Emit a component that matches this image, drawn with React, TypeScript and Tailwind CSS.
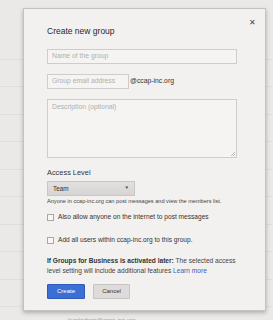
import React from 'react';

const ROWS = [0, 1, 2, 3, 4, 5, 6, 7, 8, 9];

function Checkbox({ label, className }: { label: string; className?: string }) {
  return (
    <label className={`flex items-center gap-[4px] ${className ?? ''}`}>
      <span className="w-[7px] h-[7px] border border-[#a9a7a5] bg-[#f7f6f4] shrink-0" />
      <span className="text-[6.6px] text-[#333] leading-none">{label}</span>
    </label>
  );
}

export default function App() {
  return (
    <div className="relative w-[273px] h-[320px] overflow-hidden bg-[#ebe9e7] font-['Liberation_Sans',Arial,sans-serif]">
      {/* page behind the dialog */}
      <div className="pt-[32px]">
        {ROWS.map((r) => (
          <div key={r} className="h-[27.5px] border-b border-[#e0dedc]" />
        ))}
      </div>
      <div className="absolute left-[68px] top-[316px] text-[6px] text-[#9a9896]">localadmin@ccap-inc.org</div>

      {/* dialog */}
      <div className="absolute left-[23px] top-[8px] w-[243px] h-[303px] bg-[#f2f1ef] border border-[#c4c2c0] shadow-[0_2px_4px_rgba(0,0,0,0.25)] px-[23px] pt-[18px]">
        <span className="absolute right-[9px] top-[10px] text-[7.5px] leading-none text-[#444]">✕</span>

        <h1 className="text-[8.5px] text-[#2a2a2a] leading-none">Create new group</h1>

        <div className="mt-[13px] w-[190px] h-[15px] border border-[#cfcdcb] bg-[#f5f4f2] flex items-center px-[4px] text-[6.8px] text-[#b1afad]">
          Name of the group
        </div>

        <div className="mt-[10px] flex items-center">
          <div className="w-[82px] h-[15px] border border-[#cfcdcb] bg-[#f5f4f2] flex items-center px-[4px] text-[6.8px] text-[#b1afad]">
            Group email address
          </div>
          <span className="ml-[1px] text-[6.8px] text-[#333]">@ccap-inc.org</span>
        </div>

        <div className="relative mt-[10px] w-[190px] h-[59px] border border-[#cfcdcb] bg-[#f5f4f2] px-[4px] pt-[2px] text-[6.8px] text-[#b1afad]">
          Description (optional)
          <svg className="absolute right-[1px] bottom-[1px]" width="5" height="5" viewBox="0 0 5 5">
            <path d="M1 5 L5 1 M3 5 L5 3" stroke="#a8a6a4" strokeWidth="0.7" />
          </svg>
        </div>

        <div className="mt-[11px] text-[7.4px] text-[#333] leading-none">Access Level</div>

        <div className="mt-[5px] w-[88px] h-[15px] border border-[#c9c7c5] bg-gradient-to-b from-[#e2e0de] to-[#d7d5d3] flex items-center justify-between px-[5px]">
          <span className="text-[6.4px] text-[#333]">Team</span>
          <span className="text-[4.5px] text-[#444]">▼</span>
        </div>

        <p className="mt-[3px] text-[5.6px] text-[#444] leading-none">
          Anyone in ccap-inc.org can post messages and view the members list.
        </p>

        <Checkbox className="mt-[9px]" label="Also allow anyone on the internet to post messages" />
        <Checkbox className="mt-[16px]" label="Add all users within ccap-inc.org to this group." />

        <div className="mt-[12px] text-[6.6px] leading-[10px] text-[#444] whitespace-nowrap">
          <div>
            <span className="font-bold text-[#333]">If Groups for Business is activated later:</span> The selected access
          </div>
          <div>
            level setting will include additional features <span className="text-[#3b5fb8]">Learn more</span>
          </div>
        </div>

        <div className="mt-[8px] flex gap-[8px]">
          <button className="w-[38px] h-[15px] bg-[#3c6fd6] border border-[#2f5bb5] text-white text-[6px] rounded-[1px]">Create</button>
          <button className="w-[37px] h-[15px] bg-[#dedcda] border border-[#c6c4c2] text-[#333] text-[6px] rounded-[1px]">Cancel</button>
        </div>
      </div>
    </div>
  );
}
